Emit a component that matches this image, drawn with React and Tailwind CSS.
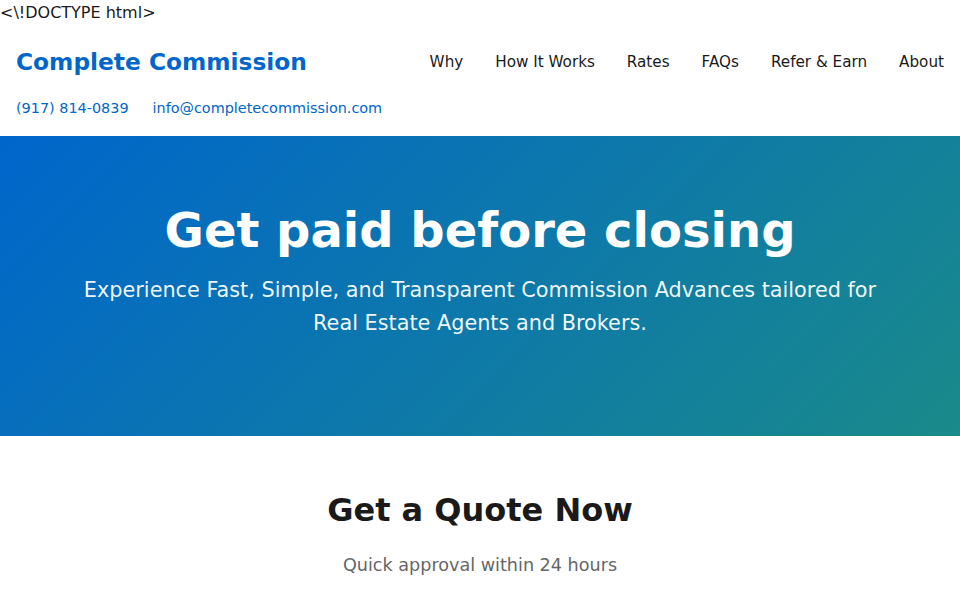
export default function App() {
  const nav = ['Why', 'How It Works', 'Rates', 'FAQs', 'Refer & Earn', 'About'];
  return (
    <div className="min-h-screen bg-white font-['DejaVu_Sans',sans-serif] text-[#1a1a1a]">
      <div className="text-base leading-[25.6px]">&lt;\!DOCTYPE html&gt;</div>

      {/* header */}
      <header className="px-4 pt-[12px] pb-[18px]">
        <div className="flex items-center justify-between h-[50px]">
          <a className="text-[23.3px] font-bold text-[#0066cc]">Complete Commission</a>
          <nav className="flex gap-8 text-[15.2px] text-[#1a1a1a]">
            {nav.map((n) => (
              <a key={n}>{n}</a>
            ))}
          </nav>
        </div>
        <div className="flex gap-6 text-[14.4px] text-[#0066cc] mt-[10px] leading-5">
          <span>(917) 814-0839</span>
          <span>info@completecommission.com</span>
        </div>
      </header>

      {/* hero */}
      <section className="h-[300px] bg-[linear-gradient(135deg,#0066cc_0%,#1a8a8a_100%)] text-white flex flex-col items-center text-center px-4 pt-[64px]">
        <h1 className="text-[48px] font-bold leading-[60px]">Get paid before closing</h1>
        <p className="mt-[14px] text-[20.8px] leading-[33px] max-w-[820px] text-white/95">
          Experience Fast, Simple, and Transparent Commission Advances tailored for Real Estate Agents and Brokers.
        </p>
      </section>

      {/* quote */}
      <section className="pt-[54px] text-center">
        <h2 className="text-[32px] font-bold leading-[40px] text-[#1a1a1a]">Get a Quote Now</h2>
        <p className="mt-[22px] text-[17.6px] text-[#666666]">Quick approval within 24 hours</p>
      </section>
    </div>
  );
}
